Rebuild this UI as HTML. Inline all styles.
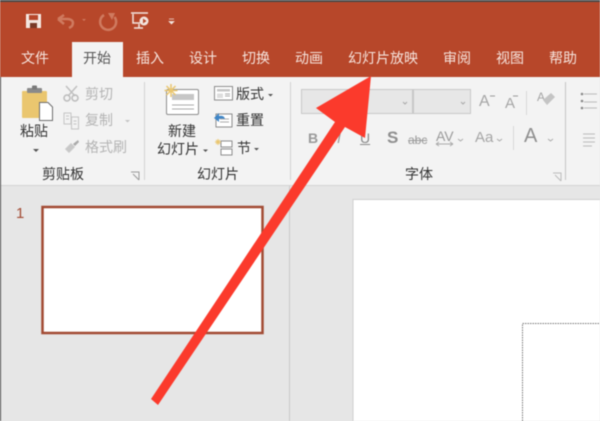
<!DOCTYPE html>
<html><head><meta charset="utf-8"><style>
html,body{margin:0;padding:0}
body{width:600px;height:421px;overflow:hidden;position:relative;background:#e6e6e6;font-family:"Liberation Sans","Noto Sans CJK SC",sans-serif}
#w{position:absolute;left:0;top:0;width:600px;height:421px;overflow:hidden;filter:blur(.4px)}
.t{position:absolute;white-space:nowrap;line-height:18px;height:18px}
.tab{color:#f6e4dd;font-size:14px;top:49px}
.k{color:#333;font-size:14px}
.g{color:#b4b4b4;font-size:14px}
.b{position:absolute}
</style></head><body><div id="w">
<div class="b" style="left:0;top:0;width:600px;height:77px;background:#b7472a"></div>
<div class="b" style="left:0;top:0;width:600px;height:1.500px;background:#4a4a4a"></div>
<div class="b" style="left:0;top:77px;width:600px;height:108px;background:#f3f3f3"></div>
<div class="b" style="left:0;top:185px;width:600px;height:1px;background:#d4d4d4"></div>
<div class="b" style="left:72px;top:42px;width:51px;height:36px;background:#f3f3f3"></div>

<div class="t tab" style="left:21px">文件</div>
<div class="t tab" style="left:83px;color:#555">开始</div>
<div class="t tab" style="left:136px">插入</div>
<div class="t tab" style="left:189px">设计</div>
<div class="t tab" style="left:242px">切换</div>
<div class="t tab" style="left:295px">动画</div>
<div class="t tab" style="left:348px">幻灯片放映</div>
<div class="t tab" style="left:443px">审阅</div>
<div class="t tab" style="left:496px">视图</div>
<div class="t tab" style="left:549px">帮助</div>

<div class="t k" style="left:20px;top:122px">粘贴</div>
<div class="t g" style="left:85px;top:85px">剪切</div>
<div class="t g" style="left:85px;top:111px">复制</div>
<div class="t g" style="left:85px;top:138px">格式刷</div>
<div class="t k" style="left:42px;top:165px">剪贴板</div>
<div class="t k" style="left:197px;top:165px">幻灯片</div>
<div class="t k" style="left:168px;top:122px">新建</div>
<div class="t k" style="left:157px;top:140px">幻灯片</div>
<div class="t k" style="left:236px;top:85px">版式</div>
<div class="t k" style="left:236px;top:111px">重置</div>
<div class="t k" style="left:237px;top:139px">节</div>
<div class="t k" style="left:405px;top:165px">字体</div>

<div class="b" style="left:144px;top:82px;width:1px;height:98px;background:#d2d2d2"></div>
<div class="b" style="left:290px;top:82px;width:1px;height:98px;background:#d2d2d2"></div>
<div class="b" style="left:565px;top:82px;width:1px;height:98px;background:#c4c4c4"></div>
<div class="b" style="left:526px;top:91px;width:1px;height:24px;background:#d8d8d8"></div>
<div class="b" style="left:513px;top:126px;width:1px;height:24px;background:#d8d8d8"></div>

<div class="b" style="left:301px;top:89px;width:112px;height:25px;background:#e7e7e7;border:1px solid #c8c8c8;box-sizing:border-box"></div>
<div class="b" style="left:413px;top:89px;width:58px;height:25px;background:#e7e7e7;border:1px solid #c8c8c8;box-sizing:border-box"></div>

<div class="t" style="left:308px;top:129px;font-size:14px;font-weight:bold;color:#9a9a9a">B</div>
<div class="t" style="left:337px;top:129px;font-size:14px;font-style:italic;color:#9a9a9a">I</div>
<div class="t" style="left:360px;top:129px;font-size:14px;color:#8a8a8a;text-decoration:underline">U</div>
<div class="t" style="left:387px;top:129px;font-size:17px;font-weight:bold;color:#8f8f8f">S</div>
<div class="t" style="left:408px;top:131px;font-size:12px;color:#9a9a9a;text-decoration:line-through">abc</div>
<div class="t" style="left:436px;top:127px;font-size:14px;color:#999">AV</div>
<div class="t" style="left:475px;top:129px;font-size:15px;color:#a5a5a5">Aa</div>
<div class="t" style="left:524px;top:127px;font-size:20px;color:#8f8f8f">A</div>
<div class="t" style="left:479px;top:93px;font-size:16px;color:#a5a5a5">A</div>
<div class="t" style="left:505px;top:95px;font-size:15px;color:#a5a5a5">A</div>
<div class="t" style="left:537px;top:88px;font-size:12px;color:#a5a5a5">A</div>

<svg class="b" style="left:0;top:0" width="600" height="421" viewBox="0 0 600 421">
  <!-- quick access -->
  <rect x="26.500" y="14.500" width="14" height="13" fill="#f3e5df" stroke="#f8eee9"/>
  <rect x="29" y="15" width="9" height="5" fill="#b7472a"/>
  <rect x="30" y="23" width="7" height="5" fill="#7a3a28"/>
  <path d="M58 19 L64 15 M58 19 L64 24 M59 19 H68 Q75 20 72 26 Q71 27 69 28" fill="none" stroke="#cf7a5f" stroke-width="2.500"/>
  <path d="M82 19 h4 l-2 2z" fill="#cf7a5f"/>
  <path d="M104 15 A8 8 0 1 0 114.500 17" fill="none" stroke="#cf7a5f" stroke-width="2.500"/>
  <path d="M108 13 L115 13 L112 20Z" fill="#cf7a5f"/>
  <path d="M131 13 H148 M133 14 V23 H140 M139 24 V28 M134 28 H143" fill="none" stroke="#f3e5df" stroke-width="1.500"/>
  <circle cx="144" cy="21" r="4.500" fill="#f3e5df"/>
  <path d="M143 18.500 L146.500 21 L143 23.500z" fill="#b7472a"/>
  <path d="M169 19 h5 M169 21.500 h5 l-2.500 2.500z" fill="#f3e5df" stroke="#f3e5df" stroke-width=".7"/>

  <!-- paste -->
  <rect x="22" y="91" width="25" height="27" rx="1" fill="#eac66f"/>
  <rect x="27" y="88" width="15" height="5" rx="1" fill="#8a8a8a"/>
  <rect x="32" y="85.500" width="5" height="4" rx="1" fill="#7a7a7a"/>
  <path d="M39.500 102.500 H48 L52.500 107 V120.500 H39.500Z" fill="#fff" stroke="#6e6e6e"/>
  <path d="M33 149 h6 l-3 3z" fill="#555"/>
  <!-- cut -->
  <path d="M66 86 L75 96 M77 86 L68 96" stroke="#c0c0c0" stroke-width="1.500" fill="none"/>
  <circle cx="67" cy="98" r="3" fill="none" stroke="#bbb" stroke-width="1.500"/>
  <circle cx="75" cy="98" r="3" fill="none" stroke="#bbb" stroke-width="1.500"/>
  <!-- copy -->
  <path d="M64 113 H71 V124 H64Z M71.500 117 H78.500 V129 H71.500Z M66 116 h3 M66 119 h3 M73.500 121 h3 M73.500 124 h3" fill="none" stroke="#c4c4c4"/>
  <path d="M125 120 h5 l-2.500 2.500z" fill="#c4c4c4"/>
  <!-- brush -->
  <path d="M65 149 L71 143 L75 147 L69 153Z" fill="#c8c8c8"/>
  <path d="M73 144 L78 140 L79 142 L75 146Z" fill="#aaa"/>
  <path d="M131 172 h8 v8 M133 174 l6 6" fill="none" stroke="#9a9a9a"/>
  <!-- new slide -->
  <rect x="166.500" y="89.500" width="32" height="25" rx="1.500" fill="#fff" stroke="#8c8c8c"/>
  <rect x="172" y="94" width="22" height="6" fill="#c6c6c6"/>
  <path d="M172 105 H194 M172 109 H194" stroke="#aaa"/>
  <path d="M171 84 V97 M164.500 90.500 H177.500 M166.500 86 L175.500 95 M175.500 86 L166.500 95" stroke="#eac66f" stroke-width="1.500"/>
  <path d="M203 149.500 h5 l-2.500 2.500z" fill="#555"/>
  <!-- layout -->
  <rect x="214.500" y="86.500" width="18" height="13.500" fill="#fff" stroke="#8c8c8c"/>
  <rect x="217" y="89" width="13" height="2.500" fill="#c6c6c6"/>
  <path d="M217 93.500 h6 v4.500 h-6z" fill="#ddd"/>
  <path d="M225 94 h5 M225 96 h5" stroke="#aaa"/>
  <path d="M268 94 h5 l-2.500 2.500z" fill="#555"/>
  <!-- reset -->
  <rect x="216" y="114" width="16" height="13" fill="#fff" stroke="#8c8c8c"/>
  <path d="M220 119 h9 M220 122 h9" stroke="#aaa"/>
  <path d="M214 118 L219 113 V116 Q224 115 225 119 Q222 118 219 119 V122Z" fill="#3f86c7"/>
  <!-- section -->
  <rect x="221" y="141" width="11" height="6" fill="#fff" stroke="#8c8c8c"/>
  <rect x="221" y="149" width="11" height="6" fill="#fff" stroke="#8c8c8c"/>
  <path d="M218 139 V145 M215 142 H221 M216 140 L220 144 M220 140 L216 144" stroke="#eac66f"/>
  <path d="M254 148 h5 l-2.500 2.500z" fill="#555"/>

  <!-- font chevrons -->
  <path d="M403 102 l2 2 l2 -2 M461 102 l2 2 l2 -2" fill="none" stroke="#aaa"/>
  <path d="M458 139 l2.500 2 l2.500 -2 M497 139 l2.500 2 l2.500 -2 M548 139 l2.500 2 l2.500 -2" fill="none" stroke="#aaa"/>
  <path d="M436 144 H453 M436 144 l3 -2 M436 144 l3 2 M453 144 l-3 -2 M453 144 l-3 2" fill="none" stroke="#aaa"/>
  <path d="M490 96 h5 M513 96 h5" stroke="#999"/>
  <path d="M543 100 L551 93 L555 97 L547 105Z" fill="#c4c4c4"/>
  <path d="M553 173 h8 v8 M555 175 l6 6" fill="none" stroke="#bbb"/>
  <!-- para -->
  <path d="M584 94 H597 M584 102 H597 M584 108 H597 M583 134 H595 M583 138 H595 M583 142 H595 M583 146 H592" stroke="#bbb"/>
  <circle cx="582" cy="94" r="1.300" fill="#888"/><circle cx="582" cy="101" r="1.300" fill="#888"/><circle cx="582" cy="108" r="1.300" fill="#888"/>

  <!-- thumbnails -->
  <rect x="42.500" y="207" width="220" height="126" fill="#fff" stroke="#a24a33" stroke-width="2.500"/>
  <rect x="289" y="186" width="1" height="235" fill="#c8c8c8"/>
  <rect x="353" y="199" width="247" height="222" fill="#fff"/>
  <rect x="352.500" y="199" width="1" height="222" fill="#d0d0d0"/>
  <rect x="353" y="199" width="247" height="1" fill="#d0d0d0"/>
  <path d="M522.500 421 V323.500 H600" fill="none" stroke="#777" stroke-dasharray="1.500 1"/>
  <rect x="0" y="77" width="1" height="344" fill="#4a4a4a"/>

  <!-- arrow -->
  <path d="M371 76 L316 108 L335 122 L151 399 L158 405 L345 127 L365 138Z" fill="#fb3a2c"/>
</svg>
<div class="t" style="left:16px;top:205px;font-size:15px;color:#a24a33">1</div>
</div></body></html>
